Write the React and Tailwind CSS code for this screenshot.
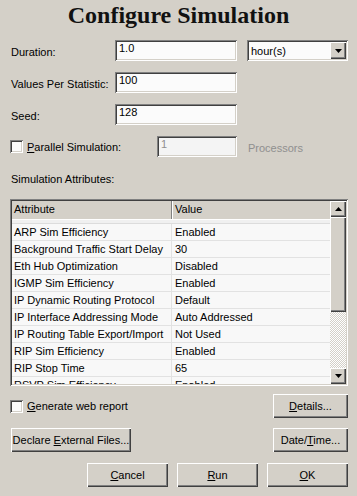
import React from 'react';

const sunken = 'shadow-[inset_1px_1px_0_#808080,inset_-1px_-1px_0_#ffffff,inset_2px_2px_0_#404040,inset_-2px_-2px_0_#d4d0c8]';
const raised = 'shadow-[inset_1px_1px_0_#ffffff,inset_-1px_-1px_0_#404040,inset_-2px_-2px_0_#808080]';

const rows = [
  ['ARP Sim Efficiency', 'Enabled'],
  ['Background Traffic Start Delay', '30'],
  ['Eth Hub Optimization', 'Disabled'],
  ['IGMP Sim Efficiency', 'Enabled'],
  ['IP Dynamic Routing Protocol', 'Default'],
  ['IP Interface Addressing Mode', 'Auto Addressed'],
  ['IP Routing Table Export/Import', 'Not Used'],
  ['RIP Sim Efficiency', 'Enabled'],
  ['RIP Stop Time', '65'],
  ['RSVP Sim Efficiency', 'Enabled'],
];

function Arrow({ up }) {
  return (
    <svg width="7" height="4" viewBox="0 0 7 4">
      <polygon points={up ? '3.5,0 7,4 0,4' : '0,0 7,0 3.5,4'} fill="#000" />
    </svg>
  );
}

function Field({ value, width, disabled }) {
  return (
    <div className={`${width} h-[21px] ${sunken} ${disabled ? 'bg-[#f4f4f4] text-[#8f8f8f]' : 'bg-[#fbfbfb]'} pl-[4px] pt-[2px] leading-[12px]`}>
      {value}
    </div>
  );
}

function Check() {
  return <div className={`w-[13px] h-[13px] shrink-0 bg-[#fbfbfb] ${sunken}`} />;
}

function Button({ children, width }) {
  return (
    <div className={`${width} h-[24px] bg-[#d4d0c8] ${raised} flex items-center justify-center`}>
      {children}
    </div>
  );
}

const U = ({ children }) => <span className="underline underline-offset-[1px]">{children}</span>;

export default function App() {
  return (
    <div className="w-[357px] h-[496px] bg-[#d4d0c8] overflow-hidden text-black text-[11px] leading-[13px] font-['Liberation_Sans',Arial,sans-serif]">
      <h1 className="text-center font-['Liberation_Serif','Times_New_Roman',serif] font-bold text-[24px] leading-[30px] text-[#111]">
        Configure Simulation
      </h1>

      <div className="pl-[10px] pr-[9px] pt-[10px]">
        {/* Duration */}
        <div className="flex items-center">
          <div className="w-[105px] pl-[1px] pt-[3px]">Duration:</div>
          <Field value="1.0" width="w-[122px]" />
          <div className={`ml-[10px] w-[101px] h-[21px] bg-[#fbfbfb] ${sunken} flex items-center pl-[4px] pr-[2px]`}>
            <span className="flex-1 pt-[1px]">hour(s)</span>
            <div className={`w-[16px] h-[17px] bg-[#d4d0c8] ${raised} flex items-center justify-center`}>
              <Arrow />
            </div>
          </div>
        </div>

        <div className="flex items-center mt-[11px]">
          <div className="w-[105px] pl-[1px] pt-[3px]">Values Per Statistic:</div>
          <Field value="100" width="w-[122px]" />
        </div>

        <div className="flex items-center mt-[11px]">
          <div className="w-[105px] pl-[1px] pt-[3px]">Seed:</div>
          <Field value="128" width="w-[122px]" />
        </div>

        <div className="flex items-center mt-[11px]">
          <div className="w-[147px] flex items-center">
            <Check />
            <span className="ml-[4px] pt-[1px]"><U>P</U>arallel Simulation:</span>
          </div>
          <Field value="1" width="w-[80px]" disabled />
          <span className="ml-[11px] pt-[3px] text-[#8f8f8f]">Processors</span>
        </div>

        <div className="mt-[16px] pl-[1px]">Simulation Attributes:</div>

        {/* List view */}
        <div className={`mt-[13px] h-[187px] ${sunken} p-[2px] flex`}>
          <div className="flex-1 flex flex-col overflow-hidden bg-[#f8f8f8]">
            <div className="h-[18px] shrink-0 flex bg-[#d4d0c8]">
              <div className="w-[160px] pl-[2px] pt-[2px] border-r border-[#808080]">Attribute</div>
              <div className="pl-[2px] pt-[2px] border-l border-white">Value</div>
            </div>
            <div className="h-[5px] shrink-0 bg-[#f0f0f0] border-t border-white border-b border-b-[#dcdcdc]" />
            {rows.map(([a, v]) => (
              <div key={a} className="h-[17px] shrink-0 flex border-b border-[#e2e2e2]">
                <div className="w-[160px] pl-[2px] pt-[2px] border-r border-[#e2e2e2] whitespace-nowrap">{a}</div>
                <div className="pl-[3px] pt-[2px] whitespace-nowrap">{v}</div>
              </div>
            ))}
          </div>
          {/* Scrollbar */}
          <div className="w-[16px] flex flex-col">
            <div className={`h-[16px] shrink-0 bg-[#d4d0c8] ${raised} flex items-center justify-center`}>
              <Arrow up />
            </div>
            <div className={`h-[95px] shrink-0 bg-[#d4d0c8] ${raised}`} />
            <div className="flex-1 bg-[image:repeating-conic-gradient(#d4d0c8_0%_25%,#ffffff_0%_50%)] bg-[length:2px_2px]" />
            <div className={`h-[16px] shrink-0 bg-[#d4d0c8] ${raised} flex items-center justify-center`}>
              <Arrow />
            </div>
          </div>
        </div>

        <div className="flex items-center justify-between mt-[8px]">
          <div className="flex items-center">
            <Check />
            <span className="ml-[4px] pt-[1px]"><U>G</U>enerate web report</span>
          </div>
          <Button width="w-[75px]"><span><U>D</U>etails...</span></Button>
        </div>

        <div className="flex items-center justify-between mt-[10px]">
          <div className="ml-[1px]">
            <Button width="w-[120px]"><span>Declare <U>E</U>xternal Files...</span></Button>
          </div>
          <Button width="w-[75px]"><span>Date/<U>T</U>ime...</span></Button>
        </div>

        <div className="flex items-center justify-end gap-[9px] mt-[11px]">
          <Button width="w-[81px]"><span><U>C</U>ancel</span></Button>
          <Button width="w-[81px]"><span><U>R</U>un</span></Button>
          <Button width="w-[81px]"><span><U>O</U>K</span></Button>
        </div>
      </div>
    </div>
  );
}
